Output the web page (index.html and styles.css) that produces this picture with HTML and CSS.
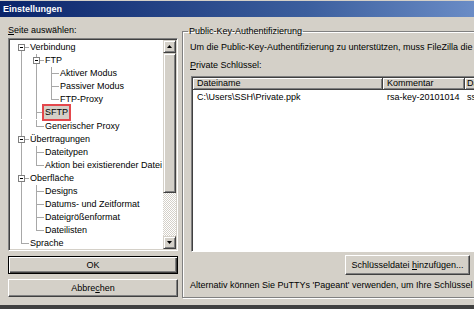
FILE: index.html
```html
<!DOCTYPE html>
<html lang="de">
<head>
    <meta charset="UTF-8">
    <title>Einstellungen</title>
    <link rel="stylesheet" href="styles.css">
</head>
<body>
    <div class="window">
        <div class="titlebar">Einstellungen</div>

        <div class="dialog">
            <!-- Seitenauswahl -->
            <div class="sidebar">
                <div class="caption"><u>S</u>eite auswählen:</div>
                <div class="tree-box">
                    <ul class="tree">
                        <li class="node"><span class="g first"><span class="toggle"></span></span><span class="label">Verbindung</span></li>
                        <li class="node"><span class="g pipe"></span><span class="g tee"><span class="toggle"></span></span><span class="label">FTP</span></li>
                        <li class="node"><span class="g pipe"></span><span class="g pipe"></span><span class="g tee"></span><span class="label">Aktiver Modus</span></li>
                        <li class="node"><span class="g pipe"></span><span class="g pipe"></span><span class="g tee"></span><span class="label">Passiver Modus</span></li>
                        <li class="node"><span class="g pipe"></span><span class="g pipe"></span><span class="g elbow"></span><span class="label">FTP-Proxy</span></li>
                        <li class="node"><span class="g pipe"></span><span class="g tee"></span><span class="label selected">SFTP</span></li>
                        <li class="node"><span class="g pipe"></span><span class="g elbow"></span><span class="label">Generischer Proxy</span></li>
                        <li class="node"><span class="g tee"><span class="toggle"></span></span><span class="label">Übertragungen</span></li>
                        <li class="node"><span class="g pipe"></span><span class="g tee"></span><span class="label">Dateitypen</span></li>
                        <li class="node"><span class="g pipe"></span><span class="g elbow"></span><span class="label">Aktion bei existierender Datei</span></li>
                        <li class="node"><span class="g tee"><span class="toggle"></span></span><span class="label">Oberfläche</span></li>
                        <li class="node"><span class="g pipe"></span><span class="g tee"></span><span class="label">Designs</span></li>
                        <li class="node"><span class="g pipe"></span><span class="g tee"></span><span class="label">Datums- und Zeitformat</span></li>
                        <li class="node"><span class="g pipe"></span><span class="g tee"></span><span class="label">Dateigrößenformat</span></li>
                        <li class="node"><span class="g pipe"></span><span class="g elbow"></span><span class="label">Dateilisten</span></li>
                        <li class="node"><span class="g elbow"></span><span class="label">Sprache</span></li>
                    </ul>
                    <div class="scrollbar">
                        <div class="sb-btn"><svg width="5" height="3" viewBox="0 0 5 3"><path d="M2.5 0 5 3H0z"/></svg></div>
                        <div class="sb-thumb"></div>
                        <div class="sb-track"></div>
                        <div class="sb-btn"><svg width="5" height="3" viewBox="0 0 5 3"><path d="M0 0h5L2.5 3z"/></svg></div>
                    </div>
                </div>
                <button class="btn default">OK</button>
                <button class="btn">Abbre<u>c</u>hen</button>
            </div>

            <!-- SFTP-Seite -->
            <fieldset class="group">
                <legend>Public-Key-Authentifizierung</legend>
                <p class="line">Um die Public-Key-Authentifizierung zu unterstützen, muss FileZilla die zu verwendenden privaten Schlüssel kennen.</p>
                <p class="line keys-caption"><u>P</u>rivate Schlüssel:</p>
                <div class="keys">
                    <div class="keys-head">
                        <div class="hd col-name">Dateiname</div>
                        <div class="hd col-comment">Kommentar</div>
                        <div class="hd col-data">Daten</div>
                    </div>
                    <div class="keys-row">
                        <div class="col-name">C:\Users\SSH\Private.ppk</div>
                        <div class="col-comment">rsa-key-20101014</div>
                        <div class="col-data">ssh-rsa 1024</div>
                    </div>
                </div>
                <div class="key-actions">
                    <button class="btn add">Schlüsseldatei <u>h</u>inzufügen...</button>
                </div>
                <p class="line hint">Alternativ können Sie PuTTYs 'Pageant' verwenden, um Ihre Schlüssel zu verwalten. FileZilla erkennt Pageant automatisch.</p>
            </fieldset>
        </div>

        <div class="taskbar"></div>
    </div>
</body>
</html>
```

FILE: styles.css
```css
/* Klassisches Windows-Dialogfenster */
body {
    margin: 0;
    background-color: #d4d0c8;
    font-family: "Liberation Sans", Arial, sans-serif;
    font-size: 9px;
    color: #000;
}

.window {
    width: 474px;
    height: 309px;
    overflow: hidden;
    display: flex;
    flex-direction: column;
}

/* Titelleiste */
.titlebar {
    flex: none;
    height: 16px;
    border-top: 1px solid #d4d0c8;
    padding-left: 3px;
    line-height: 16px;
    color: #fff;
    font-weight: bold;
    background: linear-gradient(90deg, #0a246a, #3c5f9e 65%, #6a8cc6);
}

.dialog {
    flex: 1;
    display: flex;
}

/* Linke Spalte */
.sidebar {
    flex: none;
    width: 170px;
    margin-left: 8px;
    display: flex;
    flex-direction: column;
}

.caption {
    margin-top: 7px;
    height: 13px;
    line-height: 13px;
}

.tree-box {
    display: flex;
    height: 213px;
    margin-top: 1px;
    padding: 1px;
    box-sizing: border-box;
    background-color: #fff;
    border: 1px solid;
    border-color: #808080 #fff #fff #808080;
    box-shadow: inset 1px 1px #404040, inset -1px -1px #d4d0c8;
}

.tree {
    flex: 1;
    list-style: none;
    margin: 0;
    padding: 1px 0 0 4px;
    overflow: hidden;
}

.node {
    display: flex;
    height: 13.1px;
    white-space: nowrap;
}

/* Baumlinien */
.g {
    --line: #a8a8a8;
    flex: none;
    width: 15px;
    height: 13px;
    display: flex;
    align-items: center;
    justify-content: center;
    background-repeat: no-repeat;
}

.pipe {
    background-image: linear-gradient(var(--line), var(--line));
    background-position: 7px 0;
    background-size: 1px 100%;
}

.tee {
    background-image: linear-gradient(var(--line), var(--line)), linear-gradient(var(--line), var(--line));
    background-position: 7px 0, 7px 6px;
    background-size: 1px 100%, 8px 1px;
}

.elbow {
    background-image: linear-gradient(var(--line), var(--line)), linear-gradient(var(--line), var(--line));
    background-position: 7px 0, 7px 6px;
    background-size: 1px 7px, 8px 1px;
}

.first {
    background-image: linear-gradient(var(--line), var(--line)), linear-gradient(var(--line), var(--line));
    background-position: 7px 6px, 7px 6px;
    background-size: 1px 7px, 8px 1px;
}

.toggle {
    width: 7px;
    height: 7px;
    box-sizing: border-box;
    border: 1px solid #808080;
    background: linear-gradient(#000, #000) center / 3px 1px no-repeat, #fff;
}

.label {
    height: 13px;
    line-height: 13px;
    padding: 0 1px;
}

.label.selected {
    background-color: #d4d0c8;
    outline: 2px solid #e4474c;
    outline-offset: 0;
}

/* Bildlaufleiste */
.scrollbar {
    flex: none;
    width: 13px;
    display: flex;
    flex-direction: column;
}

.sb-btn,
.sb-thumb {
    box-sizing: border-box;
    background-color: #d4d0c8;
    border: 1px solid;
    border-color: #d4d0c8 #404040 #404040 #d4d0c8;
    box-shadow: inset 1px 1px #fff, inset -1px -1px #808080;
}

.sb-btn {
    height: 13px;
    display: flex;
    align-items: center;
    justify-content: center;
}

.sb-thumb {
    height: 140px;
}

.sb-track {
    flex: 1;
    background: repeating-conic-gradient(#fff 0 25%, #d4d0c8 0 50%) 0 0 / 2px 2px;
}

/* Schaltflächen */
.btn {
    height: 18px;
    margin-top: 5px;
    padding: 0;
    font: inherit;
    color: #000;
    background-color: #d4d0c8;
    border: 1px solid;
    border-color: #fff #404040 #404040 #fff;
    box-shadow: inset -1px -1px #808080;
}

.btn.default {
    border-color: #000;
    box-shadow: inset 1px 1px #fff, inset -1px -1px #404040, inset -2px -2px #808080;
}

/* Gruppenfeld */
.group {
    flex: none;
    box-sizing: border-box;
    width: 310px;
    margin: 8px 0 0 4px;
    padding: 3px 7px 5px 7px;
    min-width: 0;
    border: 1px solid #808080;
    box-shadow: inset 1px 1px #fff, 1px 1px #fff;
    align-self: flex-start;
}

.group legend {
    margin-left: -2px;
    padding: 0 1px;
    line-height: 13px;
}

.line {
    margin: 0;
    height: 13px;
    line-height: 13px;
    white-space: nowrap;
}

.keys-caption {
    margin-top: 5px;
}

.keys {
    width: 300px;
    height: 176px;
    margin: 4px 0 0 1px;
    padding: 1px;
    box-sizing: border-box;
    background-color: #fff;
    border: 1px solid;
    border-color: #808080 #fff #fff #808080;
    box-shadow: inset 1px 1px #404040;
}

.keys-head,
.keys-row {
    display: flex;
    white-space: nowrap;
}

.hd {
    box-sizing: border-box;
    height: 12px;
    line-height: 11px;
    background-color: #d4d0c8;
    border-right: 1px solid #404040;
    border-bottom: 1px solid #404040;
    box-shadow: inset 1px 1px #fff, inset -1px -1px #808080;
}

.keys-row {
    margin-top: 1px;
    line-height: 13px;
}

.col-name {
    flex: none;
    width: 190px;
    padding-left: 4px;
    box-sizing: border-box;
}

.col-comment {
    flex: none;
    width: 82px;
    padding-left: 4px;
    box-sizing: border-box;
}

.col-data {
    flex: 1;
    padding-left: 2px;
    overflow: hidden;
}

.key-actions {
    display: flex;
    justify-content: flex-end;
    padding-right: 14px;
}

.btn.add {
    width: 125px;
    height: 20px;
    margin-top: 3px;
}

.hint {
    margin-top: 4px;
}

.taskbar {
    flex: none;
    height: 4px;
    background-color: #404040;
}
```
